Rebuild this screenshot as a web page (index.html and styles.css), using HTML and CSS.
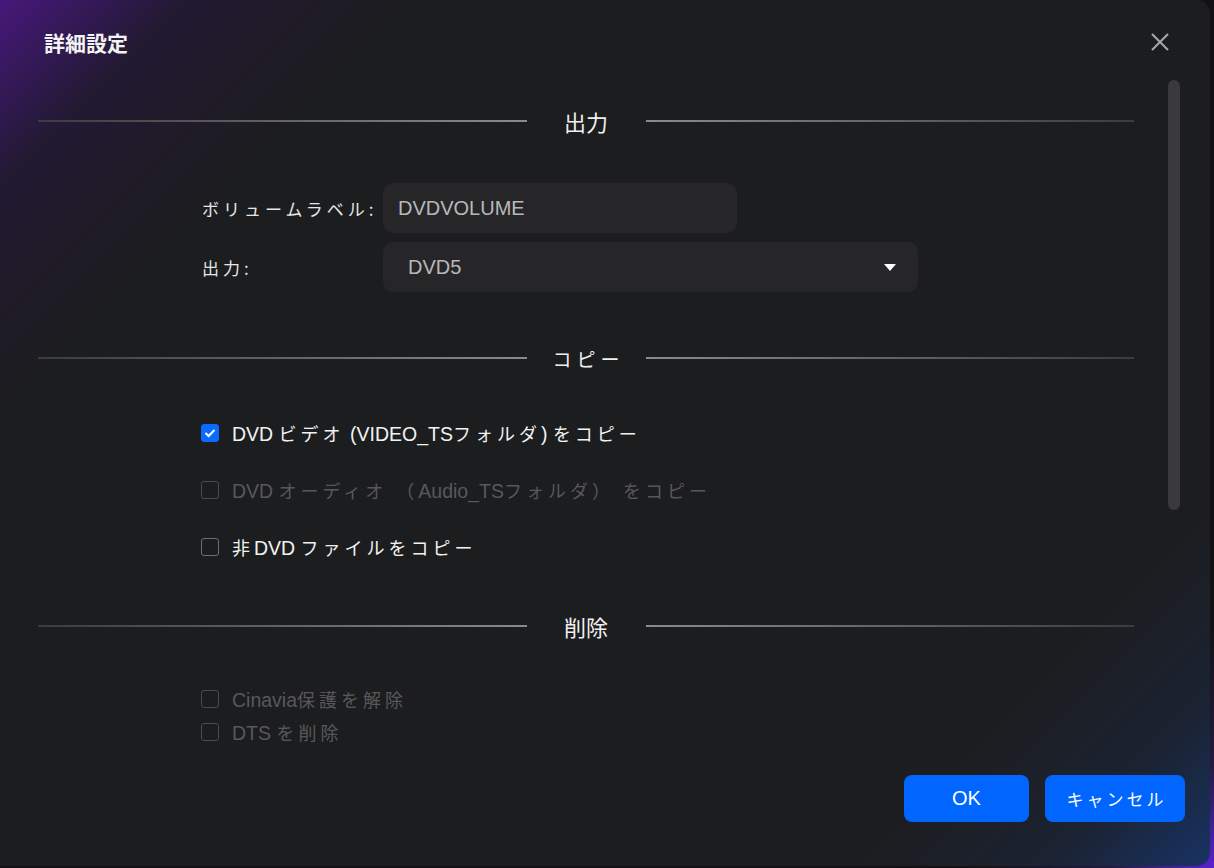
FILE: index.html
```html
<!DOCTYPE html>
<html lang="ja">
<head>
    <meta charset="UTF-8">
    <meta name="viewport" content="width=device-width, initial-scale=1.0">
    <title>詳細設定</title>
    <link rel="stylesheet" href="styles.css">
</head>
<body>
    <div class="dialog">
        <div class="dlg-head">
            <h1 class="dlg-title">詳細設定</h1>
            <button class="close-btn" aria-label="閉じる">
                <svg width="20" height="20" viewBox="0 0 20 20">
                    <path d="M2 2 L18 18 M18 2 L2 18" stroke="#a8a8aa" stroke-width="2" fill="none"/>
                </svg>
            </button>
        </div>

        <div class="scroll-thumb"></div>

        <div class="dlg-body">
            <!-- 出力 -->
            <div class="section-head">
                <span class="line line-left"></span>
                <span class="section-title">出力</span>
                <span class="line line-right"></span>
            </div>
            <div class="form-row first">
                <label class="form-label" for="volLabel">ボリュームラベル:</label>
                <input class="text-box" id="volLabel" type="text" value="DVDVOLUME">
            </div>
            <div class="form-row">
                <label class="form-label">出力:</label>
                <div class="select-box">
                    <span>DVD5</span>
                    <span class="caret"></span>
                </div>
            </div>

            <!-- コピー -->
            <div class="section-head copy">
                <span class="line line-left"></span>
                <span class="section-title kana">コピー</span>
                <span class="line line-right"></span>
            </div>
            <div class="check-list">
                <div class="check-row">
                    <span class="box checked">
                        <svg width="12" height="10" viewBox="0 0 12 10">
                            <path d="M1.5 5 L4.6 8 L10.5 2" stroke="#fff" stroke-width="2" fill="none"/>
                        </svg>
                    </span>
                    <span class="check-text">DVD <span class="jp">ビデオ</span> (VIDEO_TS<span class="jp">フォルダ</span>) <span class="jp">をコピー</span></span>
                </div>
                <div class="check-row disabled">
                    <span class="box"></span>
                    <span class="check-text">DVD <span class="jp">オーディオ （</span>Audio_TS<span class="jp">フォルダ） をコピー</span></span>
                </div>
                <div class="check-row">
                    <span class="box"></span>
                    <span class="check-text"><span class="jp">非</span>DVD <span class="jp">ファイルをコピー</span></span>
                </div>
            </div>

            <!-- 削除 -->
            <div class="section-head remove">
                <span class="line line-left"></span>
                <span class="section-title">削除</span>
                <span class="line line-right"></span>
            </div>
            <div class="check-list small">
                <div class="check-row disabled">
                    <span class="box"></span>
                    <span class="check-text">Cinavia<span class="jp">保護を解除</span></span>
                </div>
                <div class="check-row disabled">
                    <span class="box"></span>
                    <span class="check-text">DTS <span class="jp">を削除</span></span>
                </div>
            </div>
        </div>

        <div class="dlg-foot">
            <button class="btn btn-ok">OK</button>
            <button class="btn btn-cancel">キャンセル</button>
        </div>
    </div>
</body>
</html>
```

FILE: styles.css
```css
body {
    margin: 0;
    width: 1214px;
    height: 868px;
    overflow: hidden;
    font-family: "Liberation Sans", "Noto Sans CJK JP", sans-serif;
    background: linear-gradient(315deg, #5a22d0 0%, #241a40 5%, #121214 12%);
}
.dialog {
    position: relative;
    width: 1210px;
    height: 866px;
    border-radius: 0 14px 14px 0;
    overflow: hidden;
    background:
        linear-gradient(135deg, rgba(72, 24, 128, 0.95) 0%, rgba(40, 22, 70, 0.5) 9%, rgba(28, 29, 31, 0) 20%),
        linear-gradient(315deg, rgba(24, 52, 104, 0.95) 0%, rgba(26, 40, 68, 0.5) 8%, rgba(28, 29, 31, 0) 18%),
        #1c1d1f;
    color: #e8e8e8;
}
.dlg-head {
    height: 84px;
    display: flex;
    align-items: center;
    justify-content: space-between;
    padding: 0 40px 0 44px;
}
.dlg-title {
    margin: 0;
    font-family: "Noto Sans CJK JP", sans-serif;
    font-size: 21px;
    font-weight: 700;
    color: #f2f2f2;
}
.close-btn {
    background: none;
    border: none;
    padding: 0;
    width: 20px;
    height: 20px;
    cursor: pointer;
}
.scroll-thumb {
    position: absolute;
    left: 1168px;
    top: 80px;
    width: 12px;
    height: 430px;
    border-radius: 6px;
    background: #3a3a3c;
}
.dlg-body {
    padding: 0 76px 0 38px;
}
.section-head {
    display: flex;
    align-items: center;
    height: 30px;
    margin-top: 22px;
}
.section-head.copy {
    margin-top: 51px;
}
.section-head.remove {
    margin-top: 49px;
}
.line {
    flex: 1;
    height: 2px;
}
.line-left {
    background: linear-gradient(90deg, #3c3c3e, #8a8a8c);
}
.line-right {
    background: linear-gradient(90deg, #8a8a8c, #3c3c3e);
}
.section-title {
    width: 119px;
    text-align: center;
    font-family: "Noto Sans CJK JP", sans-serif;
    font-size: 22px;
    color: #f0f0f0;
}
.section-title.kana {
    font-size: 19px;
    letter-spacing: 5px;
    text-indent: 5px;
}
.form-row {
    display: flex;
    align-items: center;
    margin-top: 9px;
    padding-left: 164px;
}
.form-row.first {
    margin-top: 47px;
}
.form-label {
    width: 181px;
    font-family: "Noto Sans CJK JP", sans-serif;
    font-size: 17px;
    letter-spacing: 4px;
    color: #e6e6e6;
}
.text-box {
    width: 354px;
    height: 50px;
    box-sizing: border-box;
    border: none;
    border-radius: 10px;
    background: #262628;
    padding: 0 15px;
    font-family: "Liberation Sans", sans-serif;
    font-size: 20px;
    color: #b8b8b8;
    outline: none;
}
.select-box {
    width: 535px;
    height: 50px;
    box-sizing: border-box;
    border-radius: 10px;
    background: #262628;
    padding: 0 22px 0 25px;
    display: flex;
    align-items: center;
    justify-content: space-between;
    font-size: 20px;
    color: #b8b8b8;
}
.caret {
    width: 0;
    height: 0;
    border-left: 6px solid transparent;
    border-right: 6px solid transparent;
    border-top: 7px solid #ffffff;
}
.check-list {
    padding-left: 163px;
    margin-top: 45px;
    display: flex;
    flex-direction: column;
    gap: 27px;
}
.check-list.small {
    margin-top: 46px;
    gap: 9px;
}
.check-row {
    display: flex;
    align-items: center;
    height: 30px;
    font-size: 19.5px;
    color: #f2f2f2;
}
.check-list.small .check-row {
    height: 24px;
}
.box {
    width: 18px;
    height: 18px;
    box-sizing: border-box;
    border: 1.5px solid #6e6e70;
    border-radius: 3px;
    margin-right: 13px;
    display: flex;
    align-items: center;
    justify-content: center;
}
.box.checked {
    background: #0b6bff;
    border-color: #0b6bff;
}
.check-row.disabled {
    color: #58585a;
}
.check-row.disabled .box {
    border-color: #4a4a4c;
}
.jp {
    letter-spacing: 4px;
    font-size: 18px;
}
.dlg-foot {
    position: absolute;
    right: 25px;
    top: 775px;
    display: flex;
    gap: 16px;
}
.btn {
    height: 47px;
    border: none;
    border-radius: 8px;
    background: #0066ff;
    color: #ffffff;
    cursor: pointer;
}
.btn-ok {
    width: 125px;
    font-family: "Liberation Sans", sans-serif;
    font-size: 20px;
}
.btn-cancel {
    width: 140px;
    font-family: "Noto Sans CJK JP", sans-serif;
    font-size: 17px;
    letter-spacing: 3px;
    text-indent: 3px;
}
```
